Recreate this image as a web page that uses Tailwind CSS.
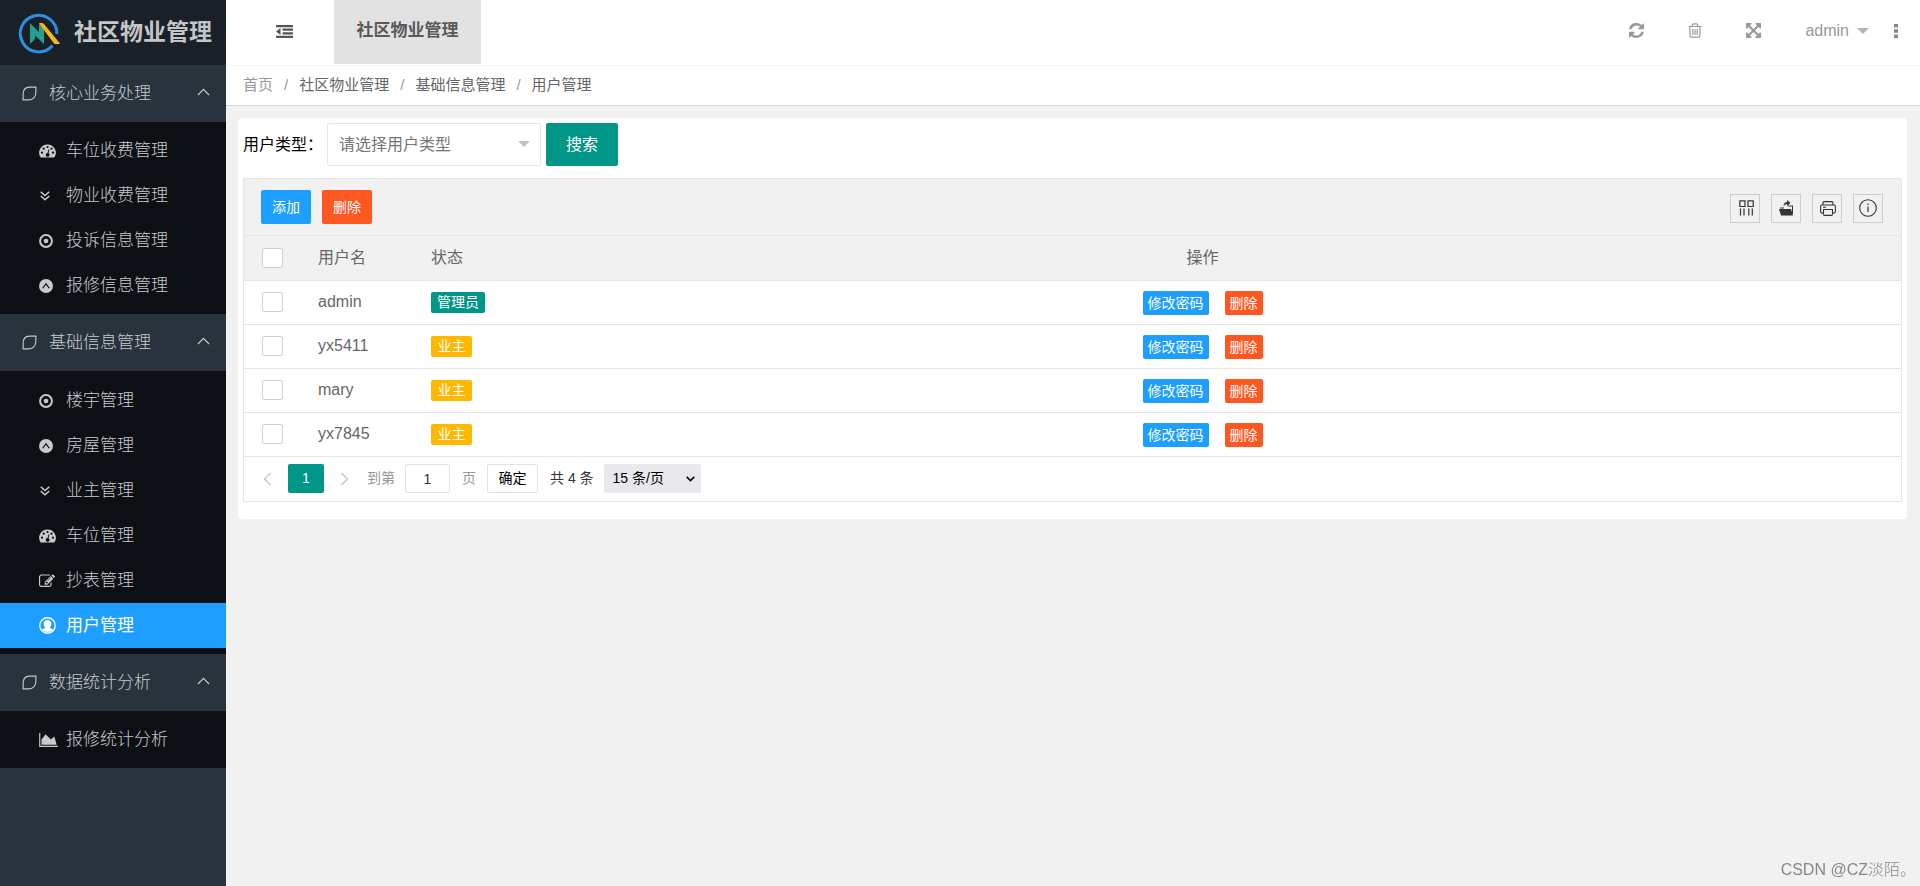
<!DOCTYPE html>
<html lang="zh-CN">
<head>
<meta charset="utf-8">
<meta name="viewport" content="width=device-width, initial-scale=1">
<title>社区物业管理</title>
<script src="https://cdn.jsdelivr.net/npm/@tailwindcss/browser@4"></script>
</head>
<body class="flex min-h-screen bg-[#f1f1f1] font-['Liberation_Sans','Noto_Sans_CJK_SC',sans-serif] text-[16px] text-[#666]">

<!-- Shared icons -->
<svg class="hidden" aria-hidden="true">
  <symbol id="i-leaf" viewBox="0 0 16 16"><path d="M8 1.200H14.800V6.500C14.800 11.500 12 14.800 7.500 14.800H1.200V9C1.200 4 3.500 1.200 8 1.200Z" fill="none" stroke="currentColor" stroke-width="1.200"/></symbol>
  <symbol id="i-up" viewBox="0 0 14 8"><path d="M1 7.200L7 1.200L13 7.200" fill="none" stroke="currentColor" stroke-width="1.300"/></symbol>
  <symbol id="i-gauge" viewBox="0 0 17 14"><path fill="currentColor" fill-rule="evenodd" d="M8.500 .5A8.300 8.300 0 0 0 1.500 13.300Q1.700 13.600 2.100 13.600H14.900Q15.300 13.600 15.500 13.300A8.300 8.300 0 0 0 8.500 .5ZM3 7.600A1.100 1.100 0 1 1 3 9.800A1.100 1.100 0 1 1 3 7.600ZM4.700 3.600A1.100 1.100 0 1 1 4.700 5.800A1.100 1.100 0 1 1 4.700 3.600ZM8.500 1.900A1.100 1.100 0 1 1 8.500 4.100A1.100 1.100 0 1 1 8.500 1.900ZM12.500 3.600A1.100 1.100 0 1 1 12.500 5.800A1.100 1.100 0 1 1 12.500 3.600ZM14 7.600A1.100 1.100 0 1 1 14 9.800A1.100 1.100 0 1 1 14 7.600ZM9.600 5.200L10.400 5.400L9.500 9.200A1.900 1.900 0 1 1 8.500 9Z"/></symbol>
  <symbol id="i-down2" viewBox="0 0 10 10"><path d="M.7 .8L5 4.600L9.300 .8M.7 5L5 8.800L9.300 5" fill="none" stroke="currentColor" stroke-width="1.500"/></symbol>
  <symbol id="i-target" viewBox="0 0 14 14"><circle cx="7" cy="7" r="5.900" fill="none" stroke="currentColor" stroke-width="2"/><circle cx="7" cy="7" r="2.300" fill="currentColor"/></symbol>
  <symbol id="i-disc" viewBox="0 0 14 14"><path fill="currentColor" fill-rule="evenodd" d="M7 0A7 7 0 1 1 7 14A7 7 0 1 1 7 0ZM7 3.800L3.200 9L4.200 9.500L7 5.700L9.800 9.500L10.800 9Z"/></symbol>
  <symbol id="i-edit" viewBox="0 0 1792 1536"><path fill="currentColor" transform="translate(0 -100)" d="M888 1184l116-116-152-152-116 116v56h96v96h56zm440-720q-16-16-33 1l-350 350q-17 17-1 33t33-1l350-350q17-17 1-33zm80 594v190q0 119-84.500 203.500T1120 1536H288q-119 0-203.500-84.500T0 1248V416q0-119 84.500-203.500T288 128h832q63 0 117 25 15 7 18 23 3 17-9 29l-49 49q-14 14-32 8-23-6-45-6H288q-66 0-113 47t-47 113v832q0 66 47 113t113 47h832q66 0 113-47t47-113v-126q0-13 9-22l64-64q15-15 35-7t20 29zm-96-738l288 288-672 672H640V992zm444 132l-92 92-288-288 92-92q28-28 68-28t68 28l152 152q28 28 28 68t-28 68z"/></symbol>
  <symbol id="i-user" viewBox="0 0 16 16"><circle cx="8" cy="8" r="7.300" fill="none" stroke="currentColor" stroke-width="1.300"/><path fill="currentColor" d="M8 2.800C10.200 2.800 11.600 4.300 11.600 6.400C11.600 8 10.900 9.400 10 10L13.400 11.700A7.300 7.300 0 0 1 2.600 11.700L6 10C5.100 9.400 4.400 8 4.400 6.400C4.400 4.300 5.800 2.800 8 2.800Z"/></symbol>
  <symbol id="i-area" viewBox="0 0 2048 1536"><path fill="currentColor" transform="translate(0 -128)" d="M2048 1536v128H0V128h128v1408h1920zM1664 512l256 896H256V832l448-576 576 576z"/></symbol>
</svg>

<aside class="w-[226px] shrink-0 bg-[#28333e] text-[17px] font-light text-[#c8cacc]">
  <a href="#" class="flex h-[65px] items-center bg-[#192027] pl-[18px] text-[23px] font-bold text-[#c3c5c7]">
    <svg class="mr-[14px] h-[42px] w-[42px] shrink-0" viewBox="0 0 42 42" aria-hidden="true">
      <path d="M34.500 33.500A18.300 18.300 0 1 1 38.900 22" fill="none" stroke="#2e8fe0" stroke-width="3"/>
      <path d="M12 11L21 20V12L26 17V32L17 23.500V27L12 32Z" fill="#26a08c"/>
      <path d="M21.500 11.500H25L41.500 31.500H36.500Z" fill="#f5b81c" stroke="#f5b81c" stroke-width="1"/>
    </svg>
    <span class="whitespace-nowrap">社区物业管理</span>
  </a>
  <nav aria-label="主菜单">
    <button type="button" aria-expanded="true" class="flex h-[57px] w-full items-center pr-4 pl-[22px]">
      <svg class="mr-3 h-[15px] w-[15px]"><use href="#i-leaf"/></svg><span>核心业务处理</span><svg class="mb-1 ml-auto h-2 w-[13px]"><use href="#i-up"/></svg>
    </button>
    <ul class="bg-[#0c1014] py-[6px]">
      <li><a href="#" class="flex h-[45px] items-center pl-[39px]"><span class="w-[27px]"><svg class="h-[14px] w-[17px]"><use href="#i-gauge"/></svg></span>车位收费管理</a></li>
      <li><a href="#" class="flex h-[45px] items-center pl-[39px]"><span class="w-[27px]"><svg class="ml-px h-[10px] w-[10px]"><use href="#i-down2"/></svg></span>物业收费管理</a></li>
      <li><a href="#" class="flex h-[45px] items-center pl-[39px]"><span class="w-[27px]"><svg class="h-[14px] w-[14px]"><use href="#i-target"/></svg></span>投诉信息管理</a></li>
      <li><a href="#" class="flex h-[45px] items-center pl-[39px]"><span class="w-[27px]"><svg class="h-[14px] w-[14px]"><use href="#i-disc"/></svg></span>报修信息管理</a></li>
    </ul>
    <button type="button" aria-expanded="true" class="flex h-[57px] w-full items-center pr-4 pl-[22px]">
      <svg class="mr-3 h-[15px] w-[15px]"><use href="#i-leaf"/></svg><span>基础信息管理</span><svg class="mb-1 ml-auto h-2 w-[13px]"><use href="#i-up"/></svg>
    </button>
    <ul class="bg-[#0c1014] pt-[7px] pb-[6px]">
      <li><a href="#" class="flex h-[45px] items-center pl-[39px]"><span class="w-[27px]"><svg class="h-[14px] w-[14px]"><use href="#i-target"/></svg></span>楼宇管理</a></li>
      <li><a href="#" class="flex h-[45px] items-center pl-[39px]"><span class="w-[27px]"><svg class="h-[14px] w-[14px]"><use href="#i-disc"/></svg></span>房屋管理</a></li>
      <li><a href="#" class="flex h-[45px] items-center pl-[39px]"><span class="w-[27px]"><svg class="ml-px h-[10px] w-[10px]"><use href="#i-down2"/></svg></span>业主管理</a></li>
      <li><a href="#" class="flex h-[45px] items-center pl-[39px]"><span class="w-[27px]"><svg class="h-[14px] w-[17px]"><use href="#i-gauge"/></svg></span>车位管理</a></li>
      <li><a href="#" class="flex h-[45px] items-center pl-[39px]"><span class="w-[27px]"><svg class="h-[14px] w-4"><use href="#i-edit"/></svg></span>抄表管理</a></li>
      <li><a href="#" aria-current="page" class="flex h-[45px] items-center bg-[#1e9fff] pl-[39px] font-normal text-white"><span class="w-[27px]"><svg class="h-[17px] w-[17px]"><use href="#i-user"/></svg></span>用户管理</a></li>
    </ul>
    <button type="button" aria-expanded="true" class="flex h-[57px] w-full items-center pr-4 pl-[22px]">
      <svg class="mr-3 h-[15px] w-[15px]"><use href="#i-leaf"/></svg><span>数据统计分析</span><svg class="mb-1 ml-auto h-2 w-[13px]"><use href="#i-up"/></svg>
    </button>
    <ul class="bg-[#0c1014] py-[6px]">
      <li><a href="#" class="flex h-[45px] items-center pl-[39px]"><span class="w-[27px]"><svg class="h-[14px] w-[19px]"><use href="#i-area"/></svg></span>报修统计分析</a></li>
    </ul>
  </nav>
</aside>

<div class="flex min-w-0 flex-1 flex-col">
  <header class="flex h-[66px] items-start border-b border-[#f4f4f4] bg-white text-[#999]">
    <button type="button" aria-label="收起菜单" class="flex h-[63px] w-[108px] items-center justify-center pl-2 text-[#555]">
      <svg class="h-[13px] w-[17px]" viewBox="0 0 17 13"><path fill="currentColor" d="M0 0H17V2.200H0ZM6.500 3.600H17V5.800H6.500ZM6.500 7.200H17V9.400H6.500ZM0 10.800H17V13H0ZM4.500 3V10L0 6.500Z"/></svg>
    </button>
    <a href="#" class="flex h-[64px] w-[147px] items-center justify-center bg-[#e2e2e2] pb-[2px] text-[17px] font-bold text-[#5a5a5a]">社区物业管理</a>
    <div class="ml-auto flex h-[61px] items-center pr-[22px]">
      <button type="button" aria-label="刷新" class="mr-11"><svg class="h-[15px] w-[15px]" viewBox="128 128 1536 1536"><path fill="currentColor" d="M1639 1056q0 5-1 7-64 268-268 434.500T892 1664q-146 0-282.500-55T366 1452l-129 129q-19 19-45 19t-45-19-19-45v-448q0-26 19-45t45-19h448q26 0 45 19t19 45-19 45l-137 137q71 66 161 102t187 36q134 0 250-65t186-179q11-17 53-117 8-23 30-23h192q13 0 22.500 9.500t9.500 22.500zM1664 256v448q0 26-19 45t-45 19h-448q-26 0-45-19t-19-45 19-45l138-138q-148-137-349-137-134 0-250 65t-186 179q-11 17-53 117-8 23-30 23H178q-13 0-22.500-9.500T146 704v-7q65-268 270-434.500T896 128q146 0 284 55.500T1425 339l130-129q19-19 45-19t45 19 19 45z"/></svg></button>
      <button type="button" aria-label="清理缓存" class="mr-11"><svg class="h-[15px] w-[14px]" viewBox="0 0 14 15"><path fill="none" stroke="currentColor" stroke-width="1.200" d="M.6 3.500H13.400M4.300 3.500V2Q4.300 .8 5.500 .8H8.500Q9.700 .8 9.700 2V3.500M2 3.500V12.600Q2 14.200 3.600 14.200H10.400Q12 14.200 12 12.600V3.500M4.800 6V12M7 6V12M9.200 6V12"/></svg></button>
      <button type="button" aria-label="全屏" class="mr-11"><svg class="h-[15px] w-[15px]" viewBox="128 128 1536 1536"><path fill="currentColor" d="M1411 541l-355 355 355 355 144-144q29-31 70-14 39 17 39 59v448q0 26-19 45t-45 19h-448q-42 0-59-40-17-39 14-69l144-144-355-355-355 355 144 144q31 30 14 69-17 40-59 40H192q-26 0-45-19t-19-45v-448q0-42 40-59 39-17 69 14l144 144 355-355-355-355-144 144q-19 19-45 19-12 0-24-5-40-17-40-59V192q0-26 19-45t45-19h448q42 0 59 40 17 39-14 69L541 381l355 355 355-355-144-144q-31-30-14-69 17-40 59-40h448q26 0 45 19t19 45v448q0 42-39 59-13 5-25 5-26 0-45-19z"/></svg></button>
      <button type="button" class="flex items-center gap-2 text-[16px]">admin <svg class="h-[6px] w-[12px]" viewBox="0 0 12 6"><path fill="#b5b5b5" d="M0 0H12L6 6Z"/></svg></button>
      <button type="button" aria-label="更多" class="ml-[25px]"><svg class="h-[14px] w-1" viewBox="0 0 4 14"><path fill="#888" d="M0 0H4V3.500H0ZM0 5.200H4V8.700H0ZM0 10.400H4V13.900H0Z"/></svg></button>
    </div>
  </header>

  <nav aria-label="面包屑" class="h-10 border-b border-[#d9d9d9] bg-white pl-[17px] text-[15px]">
    <ol class="flex h-[39px] items-center gap-[11px]">
      <li><a href="#" class="text-[#999]">首页</a></li><li class="text-[#999]" aria-hidden="true">/</li>
      <li><a href="#">社区物业管理</a></li><li class="text-[#999]" aria-hidden="true">/</li>
      <li><a href="#">基础信息管理</a></li><li class="text-[#999]" aria-hidden="true">/</li>
      <li aria-current="page">用户管理</li>
    </ol>
  </nav>

  <main class="mt-3 mr-[13px] ml-3 rounded-[4px] bg-white px-[5px] pt-[5px] pb-[17px]">
    <form class="flex h-[43px] items-center">
      <label for="utype" class="w-[84px] whitespace-nowrap text-black">用户类型：</label>
      <div class="relative mr-[5px] w-[214px]">
        <select id="utype" class="h-[43px] w-full appearance-none rounded-[2px] border border-[#e6e6e6] bg-white pl-[11px] text-[#757575]"><option>请选择用户类型</option></select>
        <svg class="pointer-events-none absolute top-[18px] right-[11px] h-[6px] w-[12px]" viewBox="0 0 12 6"><path fill="#c2c2c2" d="M0 0H12L6 6Z"/></svg>
      </div>
      <button type="button" class="h-[43px] w-[72px] rounded-[2px] bg-[#009688] text-white">搜索</button>
    </form>

    <section class="mt-3 border border-[#e6e6e6]">
      <div class="flex h-[57px] items-center border-b border-[#e6e6e6] bg-[#f1f1f1] pr-[18px] pl-[17px] text-[14px] text-white">
        <button type="button" class="mr-[11px] h-[34px] w-[50px] rounded-[2px] bg-[#1e9fff]">添加</button>
        <button type="button" class="h-[34px] w-[50px] rounded-[2px] bg-[#ff5722]">删除</button>
        <div class="ml-auto flex gap-[11px] pt-[2px] text-[#333]">
          <button type="button" aria-label="筛选列" class="flex h-[29px] w-[30px] items-center justify-center border border-[#ccc]"><svg class="ml-[2px] h-4 w-[15px]" viewBox="0 0 15 16"><path fill="none" stroke="currentColor" stroke-width="1.200" d="M.8 .8H6V6.500H.8ZM9 .8H14.200V6.500H9ZM1.500 8.500V15.500M5 8.500V15.500M9.800 8.500V15.500M13.300 8.500V15.500"/></svg></button>
          <button type="button" aria-label="导出" class="flex h-[29px] w-[30px] items-center justify-center border border-[#ccc]"><svg class="ml-px h-4 w-[15px]" viewBox="0 0 15 16"><path fill="currentColor" d="M0 9H12L14 15.500H2ZM13 6.500H9V5.500H14V14H13ZM8 0L11.500 3L8 6V4Q5.500 4 4.500 6.500Q4.500 2.300 8 2ZM1 7.500H5V8.500H1Z"/></svg></button>
          <button type="button" aria-label="打印" class="flex h-[29px] w-[30px] items-center justify-center border border-[#ccc]"><svg class="ml-px h-[15px] w-[16px]" viewBox="0 0 16 15"><path fill="none" stroke="currentColor" stroke-width="1.100" d="M3 4V1.800Q3 .6 4.200 .6H11.800Q13 .6 13 1.800V4M3.500 12H2Q.6 12 .6 10.500V5.500Q.6 4 2 4H14Q15.400 4 15.400 5.500V10.500Q15.400 12 14 12H12.500M3.500 8.500H12.500V13Q12.500 14.400 11.200 14.400H4.800Q3.500 14.400 3.500 13ZM3 6.300H6"/></svg></button>
          <button type="button" aria-label="提示" class="flex h-[29px] w-[30px] items-center justify-center border border-[#ccc]"><svg class="h-[18px] w-[18px]" viewBox="0 0 18 18"><circle cx="9" cy="9" r="8.300" fill="none" stroke="currentColor" stroke-width="1.100"/><path stroke="currentColor" stroke-width="1.200" d="M9 4.500V6M9 7.500V13"/></svg></button>
        </div>
      </div>

      <table class="w-full table-fixed border-collapse text-left">
        <colgroup><col class="w-[57px]"><col class="w-[113px]"><col class="w-[90px]"><col></colgroup>
        <thead>
          <tr class="h-11 border-b border-[#e6e6e6] bg-[#f1f1f1]">
            <th class="pl-[18px]"><input type="checkbox" aria-label="全选" class="block h-5 w-[21px] appearance-none rounded-[2px] border border-[#d2d2d2] bg-white"></th>
            <th class="pl-[17px] font-normal">用户名</th><th class="pl-[17px] font-normal">状态</th><th class="text-center font-normal">操作</th>
          </tr>
        </thead>
        <tbody>
          <tr class="h-11 border-b border-[#e6e6e6]">
            <td class="pl-[18px]"><input type="checkbox" aria-label="选择 admin" class="block h-5 w-[21px] appearance-none rounded-[2px] border border-[#d2d2d2] bg-white"></td>
            <td class="pl-[17px]">admin</td>
            <td class="pl-[17px]"><span class="flex h-[21px] w-[54px] items-center justify-center rounded-[2px] bg-[#009688] text-[14px] text-white">管理员</span></td>
            <td><div class="flex justify-center gap-4 pt-[2px] text-[14px] text-white"><button type="button" class="h-6 w-[66px] rounded-[2px] bg-[#1e9fff]">修改密码</button><button type="button" class="h-6 w-[38px] rounded-[2px] bg-[#ff5722]">删除</button></div></td>
          </tr>
          <tr class="h-11 border-b border-[#e6e6e6]">
            <td class="pl-[18px]"><input type="checkbox" aria-label="选择 yx5411" class="block h-5 w-[21px] appearance-none rounded-[2px] border border-[#d2d2d2] bg-white"></td>
            <td class="pl-[17px]">yx5411</td>
            <td class="pl-[17px]"><span class="flex h-[21px] w-[41px] items-center justify-center rounded-[2px] bg-[#ffb800] text-[14px] text-white">业主</span></td>
            <td><div class="flex justify-center gap-4 pt-[2px] text-[14px] text-white"><button type="button" class="h-6 w-[66px] rounded-[2px] bg-[#1e9fff]">修改密码</button><button type="button" class="h-6 w-[38px] rounded-[2px] bg-[#ff5722]">删除</button></div></td>
          </tr>
          <tr class="h-11 border-b border-[#e6e6e6]">
            <td class="pl-[18px]"><input type="checkbox" aria-label="选择 mary" class="block h-5 w-[21px] appearance-none rounded-[2px] border border-[#d2d2d2] bg-white"></td>
            <td class="pl-[17px]">mary</td>
            <td class="pl-[17px]"><span class="flex h-[21px] w-[41px] items-center justify-center rounded-[2px] bg-[#ffb800] text-[14px] text-white">业主</span></td>
            <td><div class="flex justify-center gap-4 pt-[2px] text-[14px] text-white"><button type="button" class="h-6 w-[66px] rounded-[2px] bg-[#1e9fff]">修改密码</button><button type="button" class="h-6 w-[38px] rounded-[2px] bg-[#ff5722]">删除</button></div></td>
          </tr>
          <tr class="h-11 border-b border-[#e6e6e6]">
            <td class="pl-[18px]"><input type="checkbox" aria-label="选择 yx7845" class="block h-5 w-[21px] appearance-none rounded-[2px] border border-[#d2d2d2] bg-white"></td>
            <td class="pl-[17px]">yx7845</td>
            <td class="pl-[17px]"><span class="flex h-[21px] w-[41px] items-center justify-center rounded-[2px] bg-[#ffb800] text-[14px] text-white">业主</span></td>
            <td><div class="flex justify-center gap-4 pt-[2px] text-[14px] text-white"><button type="button" class="h-6 w-[66px] rounded-[2px] bg-[#1e9fff]">修改密码</button><button type="button" class="h-6 w-[38px] rounded-[2px] bg-[#ff5722]">删除</button></div></td>
          </tr>
        </tbody>
      </table>

      <div class="flex h-11 items-center pl-[19px] text-[14px] text-[#333]">
        <button type="button" aria-label="上一页" class="w-[25px] text-[#c8c8c8]"><svg class="h-[14px] w-2" viewBox="0 0 8 14"><path fill="none" stroke="currentColor" stroke-width="1.500" d="M7.500 1L1.500 7L7.500 13"/></svg></button>
        <button type="button" aria-current="page" class="h-[29px] w-9 rounded-[2px] bg-[#009688] text-white">1</button>
        <button type="button" aria-label="下一页" class="w-[43px] pl-[17px] text-[#c8c8c8]"><svg class="h-[14px] w-2" viewBox="0 0 8 14"><path fill="none" stroke="currentColor" stroke-width="1.500" d="M.5 1L6.500 7L.5 13"/></svg></button>
        <label for="page" class="w-[38px] text-[#999]">到第</label>
        <input id="page" type="text" value="1" class="h-[29px] w-[45px] rounded-[2px] border border-[#e2e2e2] bg-white text-center">
        <span class="ml-3 text-[#999]">页</span>
        <button type="button" class="ml-[11px] h-[29px] w-[51px] rounded-[2px] border border-[#e2e2e2] bg-white text-black">确定</button>
        <span class="ml-3">共 4 条</span>
        <div class="relative ml-[10px]">
          <select aria-label="每页条数" class="block h-[29px] w-[97px] appearance-none rounded-[2px] bg-[#e9e9ed] pl-[9px] text-black"><option>15 条/页</option></select>
          <svg class="pointer-events-none absolute top-[12px] right-[6px] h-[6px] w-[9px]" viewBox="0 0 9 6"><path fill="none" stroke="#111" stroke-width="1.800" d="M.7 .8L4.500 4.600L8.300 .8"/></svg>
        </div>
      </div>
    </section>
  </main>
</div>

<div class="pointer-events-none fixed right-1 bottom-1 text-[16px] font-light text-[#888]">CSDN @CZ淡陌。</div>
</body>
</html>
